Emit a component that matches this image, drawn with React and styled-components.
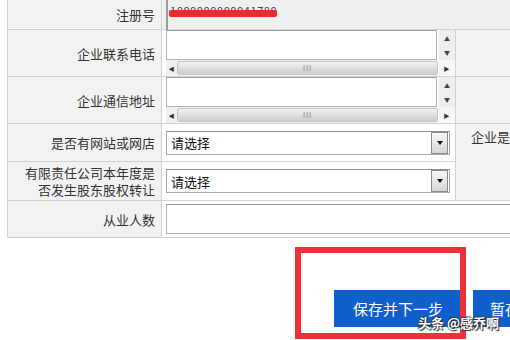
import styled, { createGlobalStyle } from "styled-components";

const GlobalStyle = createGlobalStyle`
  html, body {
    margin: 0;
    padding: 0;
    background: #fff;
    font-family: "Noto Sans CJK SC", "Noto Sans", sans-serif;
    overflow: hidden;
  }
`;

const Page = styled.div`
  position: relative;
  width: 510px;
  height: 340px;
  overflow: hidden;
`;

const Table = styled.div`
  margin-left: 7px;
  width: 560px;
  display: grid;
  grid-template-columns: 153px 293px 1fr;
  grid-template-rows: 29px 46px 46px 37px 38px 36px;
  gap: 1px;
  background: #d2d2d2;
  border-left: 1px solid #d2d2d2;
  border-bottom: 1px solid #d2d2d2;
`;

const Label = styled.div`
  grid-column: 1;
  background: #f2f2f2;
  display: flex;
  align-items: center;
  justify-content: flex-end;
  padding-right: 6px;
  font-size: 13px;
  line-height: 17px;
  color: #333;
  text-align: right;
`;

const Field = styled.div`
  background: ${(p) => (p.$grey ? "#efefef" : "#fff")};
  grid-column: ${(p) => p.$span || "2"};
  display: flex;
  align-items: ${(p) => (p.$top ? "flex-start" : "center")};
  padding-left: 4px;
  position: relative;
`;

const Side = styled.div`
  grid-column: 3;
  grid-row: ${(p) => p.$rows || "auto"};
  background: #f3f3f3;
  padding: 3px 0 0 15px;
  font-size: 13px;
  color: #333;
  white-space: nowrap;
  overflow: hidden;
`;

const ReadOnly = styled.div`
  align-self: flex-start;
  width: 100%;
  height: 26px;
  border-left: 2px solid #9a9a9a;
  font-size: 11px;
  line-height: 12px;
  color: #444;
  padding: 4px 0 0 2px;
  letter-spacing: 0.6px;
`;

const Scribble = styled.div`
  position: absolute;
  left: 7px;
  top: 10px;
  width: 108px;
  height: 7px;
  background: #ea2a30;
  border-radius: 2px;
`;

const Area = styled.div`
  width: 289px;
  display: grid;
  grid-template-columns: 271px 18px;
  grid-template-rows: 30px 16px;
`;

const AreaBox = styled.div`
  background: #fff;
  border: 1px solid #b4b4b4;
  border-top-color: #9c9c9c;
`;

const VScroll = styled.div`
  background: #eeeeee;
  margin-left: 2px;
  display: flex;
  flex-direction: column;
  align-items: center;
  justify-content: space-between;
  padding: 5px 0 4px;
  font-size: 6px;
  color: #444;
  line-height: 7px;
`;

const HScroll = styled.div`
  grid-column: 1 / 3;
  display: flex;
  align-items: stretch;
  background: #f0f0f0;
`;

const Arrow = styled.div`
  width: ${(p) => p.$w}px;
  display: flex;
  align-items: center;
  justify-content: center;
  font-size: 6px;
  color: #333;
  background: ${(p) => (p.$light ? "#f7f7f7" : "#f0f0f0")};
`;

const Thumb = styled.div`
  flex: 1;
  border: 1px solid #c6c6c6;
  border-radius: 3px;
  background: linear-gradient(#f4f4f4, #dcdcdc 55%, #cfcfcf);
  display: flex;
  align-items: center;
  justify-content: center;
  font-size: 7px;
  letter-spacing: 1px;
  color: #777;
  margin: 1px 0;
`;

const Select = styled.div`
  width: 284px;
  height: 24px;
  box-sizing: border-box;
  border: 1px solid #a9a9a9;
  border-top-color: #8f8f8f;
  display: flex;
  align-items: center;
  justify-content: space-between;
  font-size: 13px;
  color: #111;
  padding-left: 4px;
  background: #fff;
`;

const DropBtn = styled.div`
  width: 15px;
  height: 20px;
  margin-right: 1px;
  border: 1px solid #8a8a8a;
  background: linear-gradient(#f6f6f6, #d7d7d7);
  display: flex;
  align-items: center;
  justify-content: center;
`;

const Caret = styled.div`
  width: 0;
  height: 0;
  border-left: 3px solid transparent;
  border-right: 3px solid transparent;
  border-top: 4px solid #111;
`;

const TextInput = styled.div`
  width: 400px;
  height: 30px;
  box-sizing: border-box;
  border: 1px solid #b0b0b0;
  border-top-color: #959595;
  background: #fff;
`;

const Buttons = styled.div`
  display: flex;
  gap: 11px;
  margin: 52px 0 0 334px;
`;

const Button = styled.button`
  flex: none;
  width: ${(p) => p.$w}px;
  height: 37px;
  border: none;
  background: #0f5fcd;
  color: #fff;
  font-family: "Noto Sans CJK SC", sans-serif;
  font-size: 15px;
  text-align: ${(p) => (p.$left ? "left" : "center")};
  padding: ${(p) => (p.$left ? "0 0 0 17px" : "0")};
  white-space: nowrap;
  cursor: pointer;
`;

const Mark = styled.div`
  position: absolute;
  left: 295px;
  top: 247px;
  width: 171px;
  height: 92px;
  box-sizing: border-box;
  border: 6px solid #ec3238;
  pointer-events: none;
`;

const Watermark = styled.div`
  position: absolute;
  left: 418px;
  top: 313px;
  font-size: 13px;
  font-weight: 700;
  color: #fff;
  text-shadow: 0 0 1px #222, 1px 1px 1px #222, -1px -1px 1px #444;
  white-space: nowrap;
`;

const TextArea = () => (
  <Area>
    <AreaBox />
    <VScroll>
      <span>▲</span>
      <span>▼</span>
    </VScroll>
    <HScroll>
      <Arrow $w={11}>◀</Arrow>
      <Thumb>III</Thumb>
      <Arrow $w={17} $light>▶</Arrow>
    </HScroll>
  </Area>
);

const Dropdown = () => (
  <Select>
    请选择
    <DropBtn>
      <Caret />
    </DropBtn>
  </Select>
);

const App = () => (
  <Page>
    <GlobalStyle />
    <Table>
      <Label>注册号</Label>
      <Field $span="2 / 4" $grey $top>
        <ReadOnly>1000000000041780</ReadOnly>
        <Scribble />
      </Field>

      <Label>企业联系电话</Label>
      <Field $top>
        <TextArea />
      </Field>
      <Side />

      <Label>企业通信地址</Label>
      <Field $top>
        <TextArea />
      </Field>
      <Side />

      <Label>是否有网站或网店</Label>
      <Field>
        <Dropdown />
      </Field>
      <Side $rows="4 / 6">企业是否有投资信息或购买其他公司股权</Side>

      <Label>
        有限责任公司本年度是
        <br />
        否发生股东股权转让
      </Label>
      <Field>
        <Dropdown />
      </Field>

      <Label>从业人数</Label>
      <Field $span="2 / 4">
        <TextInput />
      </Field>
    </Table>

    <Buttons>
      <Button $w={128}>保存并下一步</Button>
      <Button $w={80} $left>暂存</Button>
    </Buttons>

    <Mark />
    <Watermark>头条 @感乔啊</Watermark>
  </Page>
);

export default App;
